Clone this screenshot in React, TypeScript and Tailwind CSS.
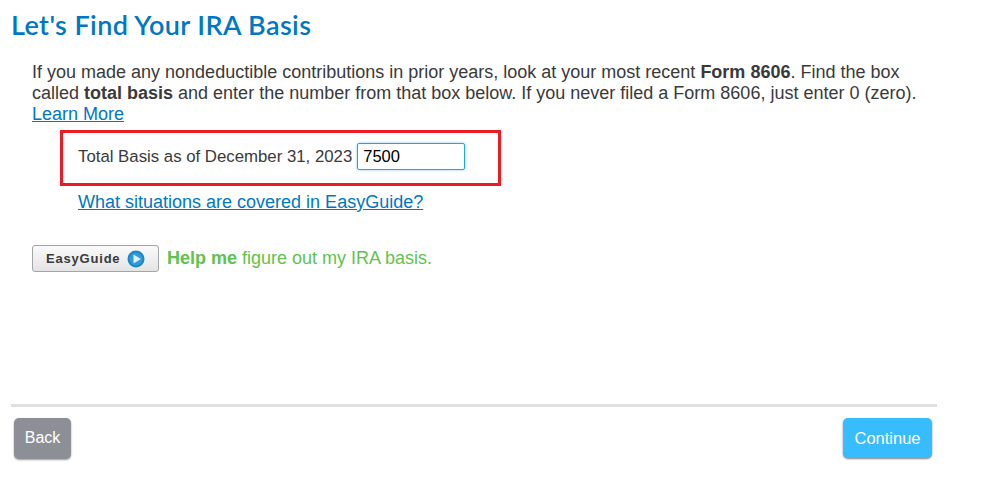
import React from "react";

function PlayIcon() {
  return (
    <svg width="18" height="18" viewBox="0 0 18 18">
      <circle cx="9" cy="9" r="8.5" fill="#1b87c9" />
      <circle cx="9" cy="9" r="6.5" fill="#2f9ad8" />
      <path d="M6.5 4.5 L14 9 L6.5 13.5 Z" fill="#dcefff" />
    </svg>
  );
}

function App() {
  return (
    <div className="w-[985px] h-[499px] bg-white overflow-hidden font-['Liberation_Sans',Arial,sans-serif] text-[#3a3a3a]">
      <div className="w-[926px] ml-[11px]">
        <h1 className="font-['Lato',sans-serif] font-semibold text-[27px] leading-[30px] pt-[10px] tracking-[0.4px] text-[#0077c5]">
          Let's Find Your IRA Basis
        </h1>

        <div className="pl-[21px] pt-[22px]">
          <p className="text-[18px] leading-[21px]">
            If you made any nondeductible contributions in prior years, look at your most recent{" "}
            <b>Form 8606</b>. Find the box called <b>total basis</b> and enter the number from that box below. If you
            never filed a Form 8606, just enter 0 (zero).
            <br />
            <a href="#" className="text-[#0077c5] underline">Learn More</a>
          </p>

          <div className="ml-[28px] mt-[5px] w-[441px] h-[56px] border-[3px] border-[#ed1c24] flex items-center pl-[15px] pb-[3px]">
            <label className="text-[16.8px] text-[#3a3a3a]">Total Basis as of December 31, 2023</label>
            <input
              defaultValue="7500"
              className="ml-[5px] w-[108px] h-[27px] border border-[#1ea7e0] rounded-[2px] px-[5px] text-[16.5px] text-black outline-none shadow-[0_0_3px_#7fd0f5]"
            />
          </div>

          <a href="#" className="inline-block ml-[46px] mt-[6px] text-[18px] leading-[21px] text-[#0077c5] underline">
            What situations are covered in EasyGuide?
          </a>

          <div className="flex items-center mt-[30px]">
            <button className="w-[127px] h-[27px] flex items-center pl-[13px] gap-[7px] border border-[#a5a5a5] rounded-[3px] bg-gradient-to-b from-[#fafafa] to-[#e4e4e4]">
              <span className="text-[13px] font-bold tracking-[0.8px] text-[#3a3a3a]">EasyGuide</span>
              <PlayIcon />
            </button>
            <span className="ml-[8px] text-[18px] text-[#5fc34e]">
              <b>Help me</b> figure out my IRA basis.
            </span>
          </div>
        </div>

        <div className="mt-[132px] h-[3px] bg-[#e0e0e0]" />

        <div className="flex justify-between pt-[11px] pl-[3px] pr-[5px]">
          <button className="w-[57px] h-[41px] rounded-[5px] bg-[#8d8f96] text-white text-[16px] pb-[1px] shadow-[0_1px_2px_rgba(0,0,0,0.4)]">
            Back
          </button>
          <button className="w-[89px] h-[40px] rounded-[5px] bg-[#36bcff] text-white text-[16.5px] pt-[1px] shadow-[0_1px_2px_rgba(0,0,0,0.5)]">
            Continue
          </button>
        </div>
      </div>
    </div>
  );
}

export default App;
